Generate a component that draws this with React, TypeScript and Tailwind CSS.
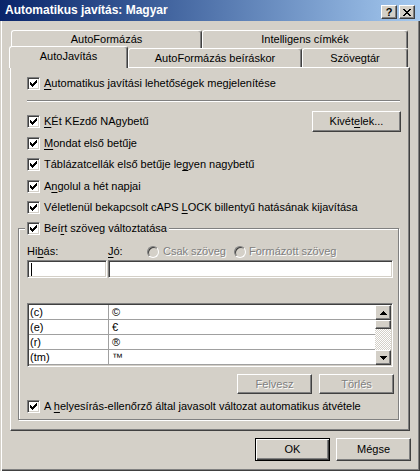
import React from 'react';
import clsx from 'clsx';

const CheckMark = () => (
  <svg width="7" height="7" viewBox="0 0 7 7" shapeRendering="crispEdges">
    <path
      d="M6 0h1v1h-1zM5 1h2v1h-2zM0 2h1v1h-1zM4 2h3v1h-3zM0 3h2v1h-2zM3 3h3v1h-3zM0 4h5v1h-5zM1 5h3v1h-3zM2 6h1v1h-1z"
      fill="#000"
    />
  </svg>
);

const CheckBox = () => (
  <span className="flex h-[13px] w-[13px] shrink-0 items-center justify-center border border-[#808080] border-r-white border-b-white bg-white shadow-[inset_1px_1px_0_#404040,inset_-1px_-1px_0_#d4d0c8]">
    <CheckMark />
  </span>
);

const CheckRow = ({ children, className }: { children: React.ReactNode; className?: string }) => (
  <div className={clsx('flex h-[13px] items-center', className)}>
    <CheckBox />
    <span className="ml-[4px] whitespace-nowrap">{children}</span>
  </div>
);

const U = ({ children }: { children: React.ReactNode }) => (
  <span className="underline underline-offset-[2px]">{children}</span>
);

const Radio = () => (
  <span className="h-[12px] w-[12px] shrink-0 rounded-full border border-[#808080] border-r-white border-b-white bg-[#d4d0c8] shadow-[inset_1px_1px_0_#404040,inset_-1px_-1px_0_#d4d0c8]" />
);

const raised =
  'border border-t-white border-l-white border-r-[#404040] border-b-[#404040] shadow-[inset_-1px_-1px_0_#808080] bg-[#d4d0c8]';

const sunken =
  'border border-[#808080] border-r-white border-b-white shadow-[inset_1px_1px_0_#404040,inset_-1px_-1px_0_#d4d0c8] bg-white';

const disabledText = 'text-[#808080] [text-shadow:1px_1px_0_#fff]';

const Tab = ({ children, className }: { children: React.ReactNode; className?: string }) => (
  <div
    className={clsx(
      'flex shrink-0 items-center justify-center rounded-t-[3px] border-t border-l border-r border-t-white border-l-white border-r-[#404040] bg-[#d4d0c8] shadow-[inset_-1px_0_0_#808080] whitespace-nowrap',
      className
    )}
  >
    {children}
  </div>
);

const Arrow = ({ up }: { up?: boolean }) => (
  <div className={clsx('flex h-[15px] w-[16px] items-center justify-center', raised)}>
    <svg width="7" height="4" viewBox="0 0 7 4" shapeRendering="crispEdges">
      {up ? (
        <path d="M3 0h1v1h-1zM2 1h3v1h-3zM1 2h5v1h-5zM0 3h7v1h-7z" fill="#000" />
      ) : (
        <path d="M0 0h7v1h-7zM1 1h5v1h-5zM2 2h3v1h-3zM3 3h1v1h-1z" fill="#000" />
      )}
    </svg>
  </div>
);

const rows: [string, string][] = [
  ['(c)', '©'],
  ['(e)', '€'],
  ['(r)', '®'],
  ['(tm)', '™'],
];

export default function App() {
  return (
    <div className="relative h-[471px] w-[420px] overflow-hidden bg-[#d4d0c8] font-['Liberation_Sans',Arial,sans-serif] text-[11px] leading-[13px] text-black shadow-[inset_1px_0_0_#d4d0c8,inset_2px_0_0_#fff,inset_-1px_-1px_0_#404040,inset_-2px_-2px_0_#808080]">
      {/* title bar */}
      <div className="flex h-[21px] items-center bg-linear-to-r from-[#0a246a] to-[#a6caf0] pr-[5px] pl-[5px]">
        <span className="text-[12px] font-bold text-white">Automatikus javítás: Magyar</span>
        <div className="mt-[3px] ml-auto flex gap-[2px]">
          <div className={clsx('flex h-[14px] w-[16px] items-center justify-center font-bold leading-none', raised)}>?</div>
          <div className={clsx('flex h-[14px] w-[16px] items-center justify-center', raised)}>
            <svg width="8" height="7" viewBox="0 0 8 7" shapeRendering="crispEdges">
              <path
                d="M0 0h2v1h-2zM6 0h2v1h-2zM1 1h2v1h-2zM5 1h2v1h-2zM2 2h4v1h-4zM3 3h2v1h-2zM2 4h4v1h-4zM1 5h2v1h-2zM5 5h2v1h-2zM0 6h2v1h-2zM6 6h2v1h-2z"
                fill="#000"
              />
            </svg>
          </div>
        </div>
      </div>

      {/* tabs, back row */}
      <div className="mt-[9px] flex h-[18px] pl-[11px]">
        <Tab className="w-[191px]">AutoFormázás</Tab>
        <Tab className="w-[206px]">Intelligens címkék</Tab>
      </div>
      {/* tabs, front row */}
      <div className="relative z-10 flex h-[19px] items-end pl-[9px]">
        <Tab className="mb-[-1px] h-[22px] w-[119px] pb-[2px]">AutoJavítás</Tab>
        <Tab className="h-[19px] w-[174px]">AutoFormázás beíráskor</Tab>
        <Tab className="h-[19px] w-[106px]">Szövegtár</Tab>
      </div>

      {/* panel */}
      <div className="ml-[10px] h-[364px] w-[400px] border border-t-white border-l-white border-r-[#404040] border-b-[#404040] pt-[9px] pr-[8px] pl-[16px] shadow-[inset_-1px_-1px_0_#808080]">
        <CheckRow>
          <U>A</U>utomatikus javítási lehetőségek megjelenítése
        </CheckRow>
        <div className="mt-[10px] mr-[1px] h-[2px] border-t border-b border-t-[#808080] border-b-white" />

        <div className="mt-[9px] flex h-[21px] items-center justify-between">
          <CheckRow>
            <U>K</U>Ét KEzdő NAgybetű
          </CheckRow>
          <button className={clsx('flex h-[21px] w-[89px] items-center justify-center', raised)}>
            Kivét<U>e</U>lek...
          </button>
        </div>
        <CheckRow className="mt-[5px]">
          <U>M</U>ondat első betűje
        </CheckRow>
        <CheckRow className="mt-[8px]">
          Táblázatcellák első betűje le<U>g</U>yen nagybetű
        </CheckRow>
        <CheckRow className="mt-[9px]">
          A<U>n</U>golul a hét napjai
        </CheckRow>
        <CheckRow className="mt-[8px]">
          Véletlenül bekapcsolt cAPS <U>L</U>OCK billentyű hatásának kijavítása
        </CheckRow>

        {/* group title */}
        <div className="relative z-10 mt-[8px] -ml-[2px] flex w-fit bg-[#d4d0c8] px-[2px]">
          <CheckRow>
            Beí<U>r</U>t szöveg változtatása
          </CheckRow>
        </div>
        {/* group box */}
        <div className="-mt-[7px] -ml-[9px] h-[192px] w-[381px] border border-[#808080] pt-[16px] pl-[8px] shadow-[inset_1px_1px_0_#fff,1px_1px_0_#fff]">
          <div className="flex h-[13px] items-center">
            <span className="w-[81px]">
              Hi<U>b</U>ás:
            </span>
            <span className="w-[39px]">
              <U>J</U>ó:
            </span>
            <span className="flex w-[87px] items-center">
              <Radio />
              <span className={clsx('ml-[4px]', disabledText)}>Csak szöveg</span>
            </span>
            <span className="flex items-center">
              <Radio />
              <span className={clsx('ml-[3px]', disabledText)}>Formázott szöveg</span>
            </span>
          </div>

          <div className="mt-[2px] flex h-[18px] gap-[1px]">
            <div className={clsx('h-full w-[80px] pt-[2px] pl-[2px]', sunken)}>
              <span className="ml-[1px] block h-[13px] w-px bg-black" />
            </div>
            <div className={clsx('h-full w-[285px]', sunken)} />
          </div>

          {/* list */}
          <div className={clsx('mt-[25px] flex h-[64px] w-[366px] p-[1px]', sunken)}>
            <div className="flex-1">
              {rows.map(([a, b]) => (
                <div key={a} className="flex h-[15px] items-center border-b border-[#a0a0a0]">
                  <div className="h-full w-[80px] border-r border-[#a0a0a0] pl-[1px] leading-[14px]">{a}</div>
                  <div className="pl-[3px]">{b}</div>
                </div>
              ))}
            </div>
            <div className="flex h-[60px] w-[16px] flex-col">
              <Arrow up />
              <div className={clsx('h-[9px] w-[16px]', raised)} />
              <div className="flex-1 bg-[repeating-conic-gradient(#d4d0c8_0%_25%,#ffffff_0%_50%)] bg-[length:2px_2px]" />
              <Arrow />
            </div>
          </div>

          <div className="mt-[7px] flex h-[20px] w-[367px] justify-end gap-[7px]">
            <div className={clsx('flex h-[20px] w-[75px] items-center justify-center', raised, disabledText)}>Felvesz</div>
            <div className={clsx('flex h-[20px] w-[75px] items-center justify-center', raised, disabledText)}>Törlés</div>
          </div>

          <CheckRow className="mt-[6px]">
            A <U>h</U>elyesírás-ellenőrző által javasolt változat automatikus átvétele
          </CheckRow>
        </div>
      </div>

      {/* dialog buttons */}
      <div className="mt-[7px] flex justify-end gap-[6px] pr-[9px]">
        <button className="flex h-[23px] w-[75px] items-center justify-center border border-black bg-[#d4d0c8] shadow-[inset_1px_1px_0_#fff,inset_-1px_-1px_0_#404040,inset_-2px_-2px_0_#808080]">
          OK
        </button>
        <button className={clsx('flex h-[23px] w-[75px] items-center justify-center', raised)}>Mégse</button>
      </div>
    </div>
  );
}
